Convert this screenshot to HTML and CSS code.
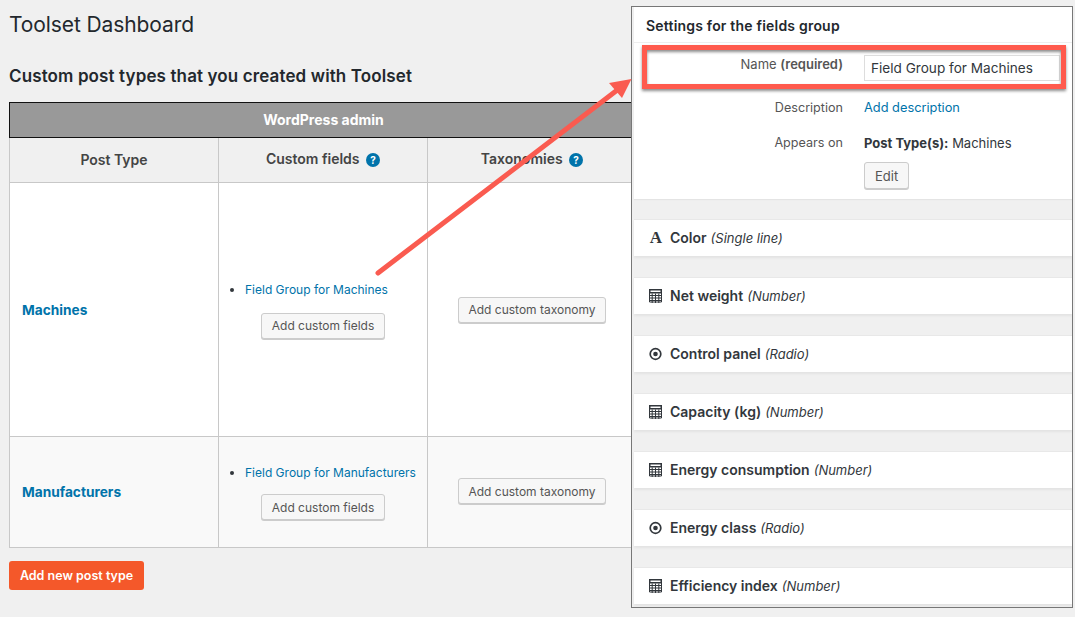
FILE: index.html
```html
<!DOCTYPE html>
<html lang="en">
<head>
<meta charset="utf-8">
<title>Toolset Dashboard</title>
<link rel="stylesheet" href="styles.css">
</head>
<body>
<main class="dash">
  <h1>Toolset Dashboard</h1>
  <h2>Custom post types that you created with Toolset</h2>
  <table class="types">
    <colgroup><col class="c"><col class="c"><col class="c"><col class="c"></colgroup>
    <thead>
      <tr class="band"><th colspan="4"><span class="band-label">WordPress admin</span></th></tr>
      <tr class="heads">
        <th class="first">Post Type</th>
        <th>Custom fields <span class="help">?</span></th>
        <th>Taxonomies <span class="help">?</span></th>
        <th></th>
      </tr>
    </thead>
    <tbody>
      <tr class="r-machines">
        <td><a class="type" href="#">Machines</a></td>
        <td class="mid">
          <ul><li><a href="#">Field Group for Machines</a></li></ul>
          <button class="btn">Add custom fields</button>
        </td>
        <td class="mid"><button class="btn">Add custom taxonomy</button></td>
        <td></td>
      </tr>
      <tr class="r-manu">
        <td class="name"><a class="type" href="#">Manufacturers</a></td>
        <td class="mid fields">
          <ul><li><a href="#">Field Group for Manufacturers</a></li></ul>
          <button class="btn">Add custom fields</button>
        </td>
        <td class="mid"><button class="btn">Add custom taxonomy</button></td>
        <td></td>
      </tr>
    </tbody>
  </table>
  <button class="primary">Add new post type</button>
</main>

<aside class="panel">
  <section class="settings">
    <h3>Settings for the fields group</h3>
    <div class="form">
      <div class="label strong-row">Name <b>(required)</b></div>
      <div class="field"><span class="input">Field Group for Machines</span></div>
      <div class="label l-desc">Description</div>
      <div class="field f-desc"><a href="#">Add description</a></div>
      <div class="label l-app">Appears on</div>
      <div class="field f-app"><b>Post Type(s):</b> Machines<br><button class="btn edit">Edit</button></div>
    </div>
  </section>
  <div class="rows">
    <div class="row"><span class="ico glyph">A</span><b>Color</b><i>(Single line)</i></div>
    <div class="row"><svg class="ico" viewBox="0 0 14 14"><use href="#calc"/></svg><b>Net weight</b><i>(Number)</i></div>
    <div class="row"><svg class="ico" viewBox="0 0 14 14"><use href="#radio"/></svg><b>Control panel</b><i>(Radio)</i></div>
    <div class="row"><svg class="ico" viewBox="0 0 14 14"><use href="#calc"/></svg><b>Capacity (kg)</b><i>(Number)</i></div>
    <div class="row"><svg class="ico" viewBox="0 0 14 14"><use href="#calc"/></svg><b>Energy consumption</b><i>(Number)</i></div>
    <div class="row"><svg class="ico" viewBox="0 0 14 14"><use href="#radio"/></svg><b>Energy class</b><i>(Radio)</i></div>
    <div class="row"><svg class="ico" viewBox="0 0 14 14"><use href="#calc"/></svg><b>Efficiency index</b><i>(Number)</i></div>
  </div>
</aside>

<svg class="overlay" width="1075" height="617" viewBox="0 0 1075 617">
  <defs>
    <filter id="sh" x="-5%" y="-20%" width="110%" height="150%"><feDropShadow dx="0" dy="2" stdDeviation="1.500" flood-color="#000" flood-opacity=".45"/></filter>
    <g id="calc">
      <path d="M0.5 0.5h12v12.500h-12z" fill="#fff" stroke="#32373c"/>
      <path d="M0 0h13v4.500H0z" fill="#32373c"/>
      <path d="M1.500 1.500h10v1.500h-10z" fill="#fff"/>
      <path d="M0 6.500h13M0 9h13M0 11.500h13M3.200 4.500V14M6.500 4.500V14M9.800 4.500V14" stroke="#32373c" stroke-width="1" fill="none"/>
    </g>
    <g id="radio">
      <circle cx="6.500" cy="7" r="5.300" fill="none" stroke="#32373c" stroke-width="1.700"/>
      <circle cx="6.500" cy="7" r="2.300" fill="#32373c"/>
    </g>
  </defs>
  <rect x="644.500" y="47.500" width="419" height="39" fill="none" stroke="#ff5a4d" stroke-width="5" filter="url(#sh)"/>
  <path d="M378 273 L616 91" stroke="#fa5b50" stroke-width="5" stroke-linecap="round" fill="none"/>
  <path d="M631.500 79 L609 83 L622 98 Z" fill="#fa5b50"/>
</svg>
</body>
</html>
```
FILE: styles.css
```css
* { box-sizing: border-box; }
html, body { margin: 0; height: 617px; overflow: hidden; }
body {
  background: #f0f0f0;
  color: #32373c;
  font-family: Inter, "Open Sans", "Liberation Sans", sans-serif;
  font-size: 13px;
  position: relative;
}
a { color: #0073aa; text-decoration: none; }
.dash { padding: 10px 0 0 9px; width: 1075px; }
h1 { margin: 0; font-size: 21px; letter-spacing: -0.1px; line-height: 30px; font-weight: 400; color: #23282d; }
h2 { margin: 21px 0 0; font-size: 17px; letter-spacing: 0.12px; line-height: 30px; font-weight: 600; color: #23282d; }
.types {
  margin-top: 11px;
  border-collapse: collapse;
  table-layout: fixed;
  width: 836px;
}
.c { width: 209px; }
.types th, .types td { border: 1px solid #c8c8c8; padding: 0; }
.types .band th {
  height: 35px;
  padding-bottom: 2px;
  background: #999;
  border: 1px solid #111;
  color: #fff;
  font-size: 14px;
  font-weight: 700;
  text-align: left;
}
.band-label { display: block; width: 627px; text-align: center; }
.types .heads th { height: 45px; padding-bottom: 3px; font-size: 14px; font-weight: 600; color: #444; background: #f0f0f0; }
.types .heads th.first { padding-bottom: 1px; }
.help {
  display: inline-block;
  width: 14px; height: 14px;
  margin-left: 3px;
  border-radius: 50%;
  background: #0073aa;
  color: #fff;
  font-size: 10px;
  line-height: 14px;
  font-weight: 700;
  text-align: center;
  vertical-align: 0;
}
.r-machines td { height: 254px; background: #fff; }
.types .r-manu td { height: 111px; padding-bottom: 2px; background: #f9f9f9; }
.types .r-manu td.fields { padding-bottom: 0; }
.types .r-manu td.name { padding-bottom: 0; }
.type { display: block; padding-left: 12px; font-size: 13.700px; font-weight: 700; }
.mid { text-align: center; }
.types ul { margin: 0 0 14px; padding: 0 0 0 26px; text-align: left; font-size: 12px; line-height: 18px; }
.types .fields ul { margin-bottom: 12px; }
.btn {
  font: inherit;
  font-size: 12px;
  height: 26px;
  padding: 0 10px;
  border: 1px solid #ccc;
  border-radius: 3px;
  background: #f7f7f7;
  box-shadow: 0 1px 0 #ccc;
  color: #555;
}
.mid > .btn:only-child { padding: 0 9px; }
.primary {
  display: block;
  margin-top: 13px;
  width: 135px;
  height: 29px;
  border: 0;
  border-radius: 3px;
  background: #f4582a;
  color: #fff;
  font: 600 12.500px Inter, "Open Sans", "Liberation Sans", sans-serif;
}
.panel {
  position: absolute;
  left: 631px; top: 6px;
  width: 442px; height: 602px;
  border: 1px solid #777;
  background: #f0f0f0;
  overflow: hidden;
  padding-left: 2px;
}
.settings { background: #fff; height: 192px; box-shadow: 0 1px 1px #e4e4e4; }
.settings h3 {
  margin: 0;
  height: 36px;
  padding: 10px 0 0 12px;
  border-bottom: 1px solid #eee;
  font-size: 14px;
  letter-spacing: 0.2px;
  line-height: 18px;
  font-weight: 600;
  color: #23282d;
}
.form {
  display: grid;
  grid-template-columns: 209px 1fr;
  column-gap: 21px;
  grid-template-rows: 45px 35px auto;
  padding-right: 10px;
}
.label { text-align: right; color: #555; font-size: 12.600px; line-height: 18px; padding-top: 12px; }
.label.strong-row { padding-top: 12px; font-size: 13px; }
.label b { font-weight: 600; }
.field { font-size: 13px; line-height: 18px; }
.input { display: block; margin-top: 12px; height: 26px; border: 1px solid #ddd; padding-left: 6px; font-size: 13.600px; line-height: 24px; width: 196px; }
.f-desc, .l-desc { padding-top: 11px; }
.f-desc { font-size: 12.800px; }
.f-app, .l-app { padding-top: 11px; }
.f-app b { font-weight: 700; }
.edit { display: block; margin-top: 10px; height: 27px; font-size: 13px; }
.rows { padding-top: 20px; display: flex; flex-direction: column; gap: 21px; }
.row {
  display: flex;
  align-items: center;
  gap: 4px;
  height: 37px;
  padding: 0 0 1px 15px;
  background: #fff;
  border-top: 1px solid #e8e8e8;
  box-shadow: 0 2px 2px #e4e4e4;
  font-size: 14px;
  color: #32373c;
  white-space: pre;
}
.row b { font-weight: 600; }
.row i { font-size: 13px; }
.ico { width: 14px; height: 14px; margin-right: 3px; flex: none; }
.glyph { display: block; text-align: center; font: 700 17px/14px "Liberation Serif", serif; color: #32373c; }
.overlay { position: absolute; left: 0; top: 0; pointer-events: none; }
```
